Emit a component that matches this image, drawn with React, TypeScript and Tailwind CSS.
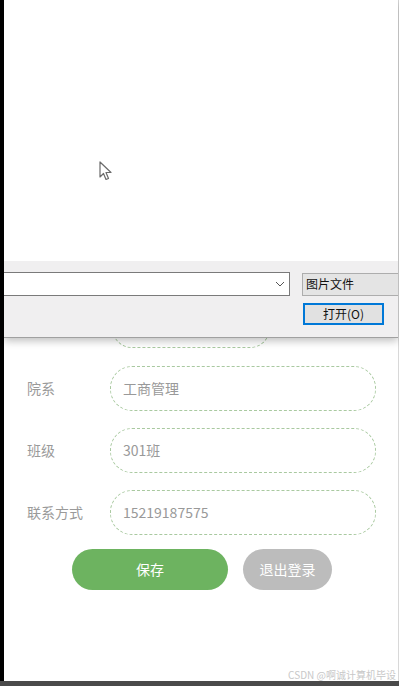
import React from "react";

const font = { fontFamily: '"Noto Sans CJK SC", "Noto Sans", sans-serif' };

function Row({ label, value }: { label: string; value: string }) {
  return (
    <div className="flex items-center h-[45px]">
      <div className="w-[106px] shrink-0 pl-[23px] text-[14px] text-[#9a9a9a]">{label}</div>
      <div className="w-[266px] shrink-0 h-[45px] rounded-[22px] border border-dashed border-[#a9c9a0] flex items-center pl-[12px] text-[14px] text-[#999]">
        {value}
      </div>
    </div>
  );
}

export default function App() {
  return (
    <div className="w-[399px] h-[686px] flex flex-col bg-[#4a4a4a]" style={font}>
      <div className="flex-1 flex">
        <div className="w-[4px] bg-black" />
        <div className="flex-1 relative bg-white border-r border-[#d8d8d8] flex flex-col">
          {/* page content under dialog */}
          <div className="pt-[303px] flex flex-col">
            <div className="pl-[108px]">
              <div className="w-[158px] h-[45px] rounded-[20px] border border-dashed border-[#a9c9a0]" />
            </div>
            <div className="mt-[18px] flex flex-col gap-[17px]">
              <Row label="院系" value="工商管理" />
              <Row label="班级" value="301班" />
              <Row label="联系方式" value="15219187575" />
            </div>
            <div className="mt-[14px] flex pl-[68px] gap-[15px]">
              <div className="w-[156px] h-[41px] rounded-full bg-[#6db360] text-white text-[14px] flex items-center justify-center">
                保存
              </div>
              <div className="w-[89px] h-[41px] rounded-full bg-[#bcbcbc] text-white text-[14px] flex items-center justify-center">
                退出登录
              </div>
            </div>
            <div className="mt-[80px] flex justify-end pr-[2px] text-[10px] text-[#c8c8c8] leading-none">
              CSDN @啊诚计算机毕设
            </div>
          </div>

          {/* file dialog overlay */}
          <div className="absolute top-0 left-0 right-0 h-[338px] flex flex-col shadow-[0_3px_8px_rgba(0,0,0,0.25)]">
            <div className="h-[261px] bg-white relative">
              <svg className="absolute left-[95px] top-[161px]" width="14" height="20" viewBox="0 0 14 20">
                <path
                  d="M1 1 L1 16 L4.5 12.5 L7 18.5 L9.5 17.5 L7 11.5 L12 11.5 Z"
                  fill="white"
                  stroke="#6b6b6b"
                  strokeWidth="1.2"
                  strokeLinejoin="round"
                />
              </svg>
            </div>
            <div className="flex-1 bg-[#f0eff0] border-b border-[#a0a0a0] flex flex-col">
              <div className="mt-[11px] flex items-center">
                <div className="w-[286px] h-[24px] bg-white border border-l-0 border-[#7a7a7a] flex items-center justify-end pr-[4px]">
                  <svg width="10" height="6" viewBox="0 0 10 6">
                    <path d="M1 1 L5 5 L9 1" fill="none" stroke="#555" strokeWidth="1" />
                  </svg>
                </div>
                <div className="ml-[12px] flex-1 h-[23px] bg-[#e4e4e4] border border-r-0 border-[#adadad] flex items-center pl-[3px] text-[12px] text-[#111]">
                  图片文件
                </div>
              </div>
              <div className="mt-[7px] flex pl-[299px]">
                <div className="w-[81px] h-[22px] bg-[#e1e1e1] border-2 border-[#0078d7] flex items-center justify-center text-[12px] text-[#111]">
                  打开(O)
                </div>
              </div>
            </div>
          </div>
        </div>
      </div>
      <div className="h-[5px] bg-[#4a4a4a]" />
    </div>
  );
}
